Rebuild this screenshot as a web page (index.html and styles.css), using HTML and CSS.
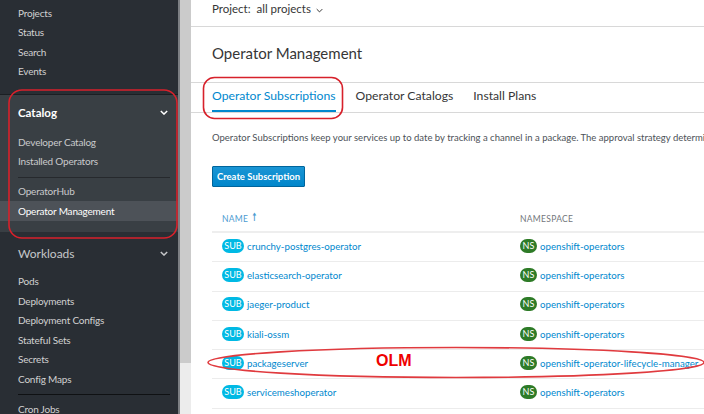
FILE: index.html
```html
<!DOCTYPE html>
<html>
<head>
<meta charset="utf-8">
<link rel="stylesheet" href="styles.css">
</head>
<body>
<div class="page">
  <nav class="sidebar">
    <ul class="nav-top">
      <li>Projects</li>
      <li>Status</li>
      <li>Search</li>
      <li>Events</li>
    </ul>
    <section class="nav-section open">
      <div class="nav-head">Catalog <svg class="chev" viewBox="0 0 10 6" width="8" height="5"><path d="M1 1 L5 5 L9 1" fill="none" stroke="#fff" stroke-width="1.8"/></svg></div>
      <ul class="nav-sub">
        <li>Developer Catalog</li>
        <li>Installed Operators</li>
      </ul>
      <div class="nav-sep"></div>
      <ul class="nav-sub">
        <li>OperatorHub</li>
        <li class="active">Operator Management</li>
      </ul>
    </section>
    <section class="nav-section">
      <div class="nav-head dim">Workloads <svg class="chev" viewBox="0 0 10 6" width="8" height="5"><path d="M1 1 L5 5 L9 1" fill="none" stroke="#c5c7c9" stroke-width="1.8"/></svg></div>
      <ul class="nav-sub light">
        <li>Pods</li>
        <li>Deployments</li>
        <li>Deployment Configs</li>
        <li>Stateful Sets</li>
        <li>Secrets</li>
        <li>Config Maps</li>
      </ul>
      <div class="nav-sep dark"></div>
      <ul class="nav-sub light">
        <li>Cron Jobs</li>
      </ul>
    </section>
  </nav>
  <div class="scrollbar"><div class="thumb"></div></div>
  <main class="main">
    <div class="project-bar">Project:&nbsp; all projects <svg viewBox="0 0 10 6" width="7" height="5"><path d="M1 1 L5 5 L9 1" fill="none" stroke="#333" stroke-width="1.4"/></svg></div>
    <h1 class="title">Operator Management</h1>
    <div class="tabs">
      <span class="tab active">Operator Subscriptions</span>
      <span class="tab">Operator Catalogs</span>
      <span class="tab">Install Plans</span>
    </div>
    <div class="content">
      <p class="desc">Operator Subscriptions keep your services up to date by tracking a channel in a package. The approval strategy determines either manual or automatic updates.</p>
      <button class="btn">Create Subscription</button>
      <div class="table">
        <div class="row head">
          <div class="c1 sorted">NAME <span class="arrow">&#x1F815;</span></div>
          <div class="c2">NAMESPACE</div>
        </div>
        <div class="row"><div class="c1"><span class="badge sub">SUB</span><a>crunchy-postgres-operator</a></div><div class="c2"><span class="badge ns">NS</span><a>openshift-operators</a></div></div>
        <div class="row"><div class="c1"><span class="badge sub">SUB</span><a>elasticsearch-operator</a></div><div class="c2"><span class="badge ns">NS</span><a>openshift-operators</a></div></div>
        <div class="row"><div class="c1"><span class="badge sub">SUB</span><a>jaeger-product</a></div><div class="c2"><span class="badge ns">NS</span><a>openshift-operators</a></div></div>
        <div class="row"><div class="c1"><span class="badge sub">SUB</span><a>kiali-ossm</a></div><div class="c2"><span class="badge ns">NS</span><a>openshift-operators</a></div></div>
        <div class="row"><div class="c1"><span class="badge sub">SUB</span><a>packageserver</a><span class="olm">OLM</span></div><div class="c2"><span class="badge ns">NS</span><a>openshift-operator-lifecycle-manager</a></div></div>
        <div class="row"><div class="c1"><span class="badge sub">SUB</span><a>servicemeshoperator</a></div><div class="c2"><span class="badge ns">NS</span><a>openshift-operators</a></div></div>
      </div>
    </div>
  </main>
  <svg class="annot" width="704" height="414" viewBox="0 0 704 414">
    <rect x="9" y="90" width="168" height="148" rx="13" ry="13" fill="none" stroke="#d7212b" stroke-width="1.6"/>
    <rect x="203.5" y="77.5" width="139" height="41" rx="11" ry="11" fill="none" stroke="#d7212b" stroke-width="1.6"/>
    <ellipse cx="456" cy="362.5" rx="248" ry="15" fill="none" stroke="#e03a3e" stroke-width="1.6"/>
  </svg>
</div>
</body>
</html>
```
FILE: styles.css
```css
* { box-sizing: border-box; }
html, body { margin: 0; padding: 0; }
body {
  width: 704px;
  height: 414px;
  overflow: hidden;
  font-family: "Lato", "Liberation Sans", sans-serif;
  background: #fff;
}
.page {
  position: relative;
  display: flex;
  width: 704px;
  height: 414px;
  overflow: hidden;
}
ul { list-style: none; margin: 0; padding: 0; }

/* sidebar */
.sidebar {
  width: 178px;
  flex: none;
  background: #292e34;
  color: #d1d1d1;
  font-size: 10px;
  letter-spacing: -0.2px;
  padding-top: 3.5px;
}
.nav-top { padding-bottom: 12px; border-bottom: 1px solid #1b1f23; }
.nav-top li, .nav-sub li {
  height: 19.5px;
  line-height: 19.5px;
  padding-left: 18px;
}
.nav-section.open {
  background: #393f44;
  padding-bottom: 11px;
}
.nav-head {
  height: 38px;
  display: flex;
  align-items: center;
  justify-content: space-between;
  padding: 0 10px 3px 18px;
  font-size: 11.5px;
  font-weight: 700;
  letter-spacing: 0;
  color: #fff;
}
.nav-head.dim {
  color: #c5c7c9;
  font-weight: 400;
  font-size: 12px;
  height: 40px;
  padding-top: 2px;
  padding-bottom: 0;
}
.nav-sub li { color: #c9cacc; }
.nav-sub.light li { color: #d1d1d1; }
.nav-sub li.active {
  background: #4d5258;
  color: #fff;
  height: 20px;
  line-height: 20px;
}
.nav-sep {
  margin: 5px 8px 4px 18px;
  border-top: 1px solid #26292d;
}
.nav-sep.dark { margin: 5px 8px 5px 18px; border-top-color: #0f1113; }

.scrollbar {
  width: 13px;
  flex: none;
  background: #ececec;
  border-left: 2px solid #7c7f83;
}
.thumb {
  height: 363px;
  width: 11px;
  background: #cbcbcb;
}

/* main */
.main {
  flex: 1;
  min-width: 0;
  overflow: hidden;
  color: #363636;
}
.project-bar {
  height: 27px;
  border-bottom: 1px solid #d8d8d8;
  padding: 2px 0 0 21px;
  font-size: 11.5px;
  line-height: 14px;
  color: #363636;
}
.project-bar svg { margin-left: 2px; vertical-align: middle; }
.title {
  margin: 0;
  height: 56px;
  padding: 16px 0 0 21px;
  font-size: 15px;
  line-height: 20px;
  font-weight: 400;
  color: #363636;
  border-bottom: 1px solid #d8d8d8;
}
.tabs {
  display: flex;
  gap: 20px;
  height: 30px;
  padding-left: 21px;
  border-bottom: 1px solid #d8d8d8;
}
.tab {
  font-size: 12.2px;
  line-height: 26px;
  color: #363636;
  white-space: nowrap;
}
.tab.active {
  color: #0088ce;
  border-bottom: 2px solid #0088ce;
  height: 29px;
}
.content { padding-left: 21px; }
.desc {
  margin: 18px 0 0;
  font-size: 9.5px;
  line-height: 14px;
  color: #4d5258;
  white-space: nowrap;
}
.btn {
  display: block;
  margin-top: 21px;
  width: 93px;
  height: 21px;
  padding: 0;
  border: 1px solid #00659c;
  border-radius: 1px;
  background: linear-gradient(#1a95d4, #0086cb);
  color: #fff;
  font-family: inherit;
  font-size: 9.5px;
  font-weight: 700;
}
.table { margin-top: 19px; }
.row {
  display: flex;
  height: 29.3px;
  align-items: center;
  padding-bottom: 3px;
  border-bottom: 1px solid #ececec;
  font-size: 9.7px;
  white-space: nowrap;
}
.row.head { height: 27px; padding-bottom: 0; border-bottom: 2px solid #eeeeee; font-size: 8.5px; letter-spacing: 0.3px; color: #72767b; }
.c1 { width: 298px; padding-left: 10px; display: flex; align-items: center; position: relative; }
.c2 { flex: 1; padding-left: 10px; display: flex; align-items: center; }
.sorted { color: #4c9bd1; }
.arrow { margin-left: 4px; font-size: 11px; color: #4c9bd1; }
a { color: #0088ce; }
.badge {
  display: inline-block;
  height: 14px;
  line-height: 14px;
  border-radius: 7px;
  color: #fff;
  font-size: 9px;
  text-align: center;
  margin-right: 3px;
}
.badge.sub { width: 22px; background: #00b9e4; }
.badge.ns { width: 17px; background: #2e7b27; }
.olm {
  position: absolute;
  left: 164px;
  top: -4px;
  color: #ee0000;
  font-weight: 700;
  font-size: 16px;
  font-family: "Liberation Sans", sans-serif;
}
.annot {
  position: absolute;
  left: 0;
  top: 0;
  pointer-events: none;
}
```
